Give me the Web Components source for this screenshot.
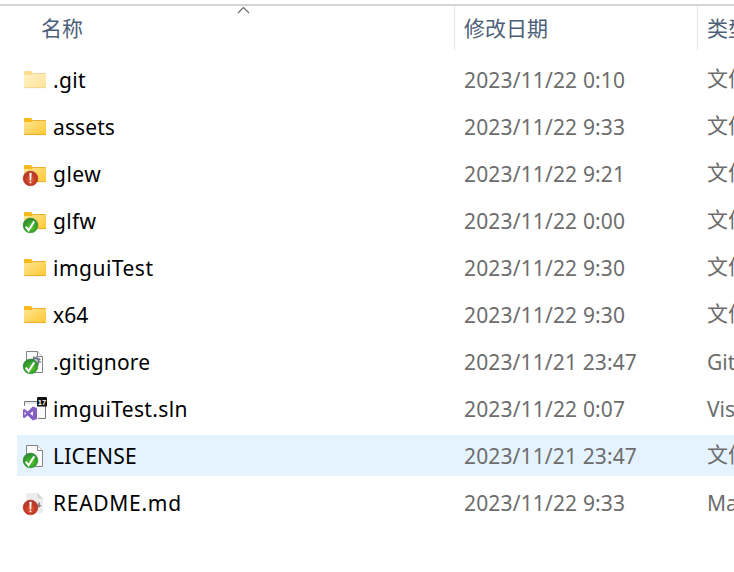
<!DOCTYPE html>
<html lang="zh-CN">
<head>
<meta charset="utf-8">
<title>Files</title>
<style>
html,body{margin:0;background:#fff;overflow:hidden}
body{width:734px;height:572px;font:21px/28px "Noto Sans","Noto Sans CJK SC",sans-serif}
</style>
</head>
<body>
<file-list></file-list>
<script>
const folder = `<path d="M1 8V4.8Q1 4 1.8 4h5.6q.7 0 1.1.6L9.6 6.2V8z" fill="#f8b81c"/>
<path d="M1 8h8l1.3-2H22.4q.6 0 .6.6V20.4q0 .6-.6.6H1.6q-.6 0-.6-.6z" fill="url(#f)"/><path d="M9.4 6.5H22.8M1.4 20.6h21.2" stroke="#eaa928" stroke-width=".9"/>`;
const page = `<path d="M3.5 2.5h11l5 5v16h-16z" fill="#fafafa" stroke="#858585"/><path d="M14.5 2.5v5h5" fill="#fff" stroke="#858585"/>`;
const ok = `<circle cx="7.5" cy="17.4" r="7.4" fill="url(#g)" stroke="#278127" stroke-width=".5"/><path d="M2.7 18.6l2.9 3.6 5.6-8.8" fill="none" stroke="#fff" stroke-width="2"/>`;
const bad = `<circle cx="7.5" cy="17.4" r="7.4" fill="url(#r)" stroke="#a83428" stroke-width=".5"/><path d="M6.4 12q1.1-.7 2.2 0l-.4 7.4H6.8z" fill="#fff"/><circle cx="7.5" cy="21.4" r=".95" fill="#fff"/>`;
const art = {
  dim: `<g opacity=".5">${folder}</g>`,
  folder,
  folderBad: folder + bad,
  folderOk: folder + ok,
  gear: page + `<circle cx="12.8" cy="12" r="2.9" fill="#c3cdd6" stroke="#69747d" stroke-width="1.6"/><circle cx="12.8" cy="12" r="4.3" fill="none" stroke="#69747d" stroke-width="1.3" stroke-dasharray="1.7 1.68"/>` + ok,
  page: page + ok,
  md: `<path d="M5 3h9.5L20 8.5v13q0 2-2 2H5q-2 0-2-2V5q0-2 2-2z" fill="#ededed"/><path d="M14.5 3v3.5q0 2 2 2H20z" fill="#d5d5d5"/><path d="M15.3 12.5h1.6v2.4h1.8l-2.6 2.8-2.6-2.8h1.8z" fill="#858585"/>` + bad,
  sln: `<path d="M1.5 5.5h21v17h-21z" fill="#fafafa" stroke="#777"/><path d="M2 6h20v2H2z" fill="#e8e8e8"/><rect x="-.5" y="9.8" width="15.5" height="15.5" fill="#fff"/><path d="M0 13.5l1.5-.6 3.2 2.5 5-5 4.3 1.7v10.8l-4.3 1.7-5-5-3.2 2.5-1.5-.6zm1.6 2.3v3.4l1.6-1.7zm8.4-.6l-3 2.3 3 2.3z" fill="#865fc5" fill-rule="evenodd"/><rect x="14" y="1" width="10" height="9.6" rx="1.2" fill="#111"/><text x="19" y="8.5" font-family="Liberation Sans" font-size="7.5" font-weight="700" fill="#fff" text-anchor="middle">17</text>`
};
class FileIcon extends HTMLElement {
  connectedCallback() {
    this.attachShadow({mode:'open'}).innerHTML = `<style>:host{display:block;width:24px;height:25px}svg{display:block;overflow:visible}</style>
<svg width="24" height="25" viewBox="0 0 24 25"><defs>
<linearGradient id="f" x2="1" y2="1"><stop stop-color="#ffe596"/><stop offset="1" stop-color="#ffc831"/></linearGradient>
<radialGradient id="g" cx=".55" cy=".62" r=".58"><stop stop-color="#58c32c"/><stop offset=".6" stop-color="#34a428"/><stop offset="1" stop-color="#33883a"/></radialGradient>
<radialGradient id="r" cx=".5" cy=".6" r=".58"><stop stop-color="#e2603c"/><stop offset=".6" stop-color="#c43a23"/><stop offset="1" stop-color="#ac3b30"/></radialGradient>
</defs>${art[this.getAttribute('kind')]}</svg>`;
  }
}
/* Text run whose tracking is adjusted to a requested advance width. */
class FitText extends HTMLElement {
  connectedCallback() {
    this.attachShadow({mode:'open'}).innerHTML = `<style>:host{display:block;white-space:pre}span{display:inline-block}</style><span><slot></slot></span>`;
    const w = +this.getAttribute('width');
    if (!w) return;
    const s = this.shadowRoot.querySelector('span');
    s.style.letterSpacing = (w - s.getBoundingClientRect().width) / this.textContent.length + 'px';
  }
}
class FileRow extends HTMLElement {
  connectedCallback() {
    const a = n => this.getAttribute(n);
    const date = a('date');
    this.attachShadow({mode:'open'}).innerHTML = `<style>
:host{display:grid;grid-template-columns:6px 30px 411px 243px 80px;height:41px;align-items:center;margin-left:17px;color:#6d6d6d}
:host([selected]){background:#e5f3ff}
.name{color:#000}file-icon{grid-column:2}.cjk{padding-bottom:3px}
</style><file-icon kind="${a('kind')}"></file-icon><fit-text class="name" width="${a('width')}">${a('name')}</fit-text><fit-text width="${date.length > 15 ? 173 : 161.2}">${date}</fit-text><fit-text class="${a('type') > '\u2e80' ? 'cjk' : ''}">${a('type')}</fit-text>`;
  }
}
class ListHeader extends HTMLElement {
  connectedCallback() {
    this.attachShadow({mode:'open'}).innerHTML = `<style>
:host{display:grid;grid-template-columns:454px 243px 100px;height:44px;border-top:2px solid #d5d5d5;color:#4c607a;position:relative}
div{padding:8px 0 0 9px;border-left:1px solid #e5e5e5;box-sizing:border-box}
.first{padding-left:41px;border:0}
svg{position:absolute;left:237px;top:0}
</style><div class="first">名称</div><div>修改日期</div><div>类型</div><svg width="13" height="8"><path d="M1 7l5.5-5.5L12 7" fill="none" stroke="#666" stroke-width="1.1"/></svg>`;
  }
}
class FileList extends HTMLElement {
  connectedCallback() {
    const rows = [
      ['dim','.git',32.8,'2023/11/22 0:10','文件夹'],
      ['folder','assets',62,'2023/11/22 9:33','文件夹'],
      ['folderBad','glew',48.2,'2023/11/22 9:21','文件夹'],
      ['folderOk','glfw',43.2,'2023/11/22 0:00','文件夹'],
      ['folder','imguiTest',100.5,'2023/11/22 9:30','文件夹'],
      ['folder','x64',35.5,'2023/11/22 9:30','文件夹'],
      ['gear','.gitignore',97.2,'2023/11/21 23:47','Git Ignore'],
      ['sln','imguiTest.sln',134.8,'2023/11/22 0:07','Visual Studio'],
      ['page','LICENSE',84,'2023/11/21 23:47','文件'],
      ['md','README.md',128.8,'2023/11/22 9:33','Markdown']
    ];
    this.attachShadow({mode:'open'}).innerHTML = `<style>
:host{display:block;width:734px;height:572px;padding-top:4px;box-sizing:border-box;overflow:hidden}
section{display:grid;gap:6px;margin-top:9px}
</style><list-header></list-header><section>${rows.map((r,i)=>`<file-row kind="${r[0]}" name="${r[1]}" width="${r[2]}" date="${r[3]}" type="${r[4]}"${i===8?' selected':''}></file-row>`).join('')}</section>`;
  }
}
customElements.define('file-icon', FileIcon);
customElements.define('fit-text', FitText);
customElements.define('file-row', FileRow);
customElements.define('list-header', ListHeader);
customElements.define('file-list', FileList);
</script>
</body>
</html>
